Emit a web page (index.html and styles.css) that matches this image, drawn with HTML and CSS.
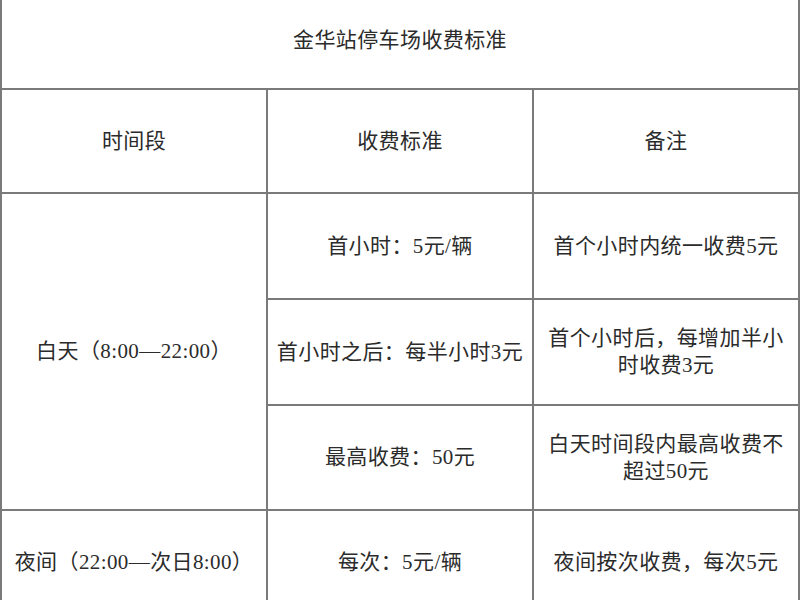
FILE: index.html
```html
<!DOCTYPE html>
<html lang="zh-CN">
<head>
<meta charset="utf-8">
<title>金华站停车场收费标准</title>
<link rel="stylesheet" href="styles.css">
</head>
<body>
<div class="sheet">
  <div class="cell title">金华站停车场收费标准</div>
  <div class="cell head">时间段</div>
  <div class="cell head">收费标准</div>
  <div class="cell head">备注</div>
  <div class="cell day">白天（8:00—22:00）</div>
  <div class="cell">首小时：5元/辆</div>
  <div class="cell">首个小时内统一收费5元</div>
  <div class="cell">首小时之后：每半小时3元</div>
  <div class="cell">首个小时后，每增加半小时收费3元</div>
  <div class="cell">最高收费：50元</div>
  <div class="cell">白天时间段内最高收费不超过50元</div>
  <div class="cell">夜间（22:00—次日8:00）</div>
  <div class="cell">每次：5元/辆</div>
  <div class="cell">夜间按次收费，每次5元</div>
</div>
</body>
</html>
```

FILE: styles.css
```css
* { box-sizing: border-box; }
html, body {
  margin: 0;
  padding: 0;
  background: #ffffff;
}
body {
  font-family: "Liberation Serif", "Noto Sans CJK SC", serif;
  font-size: 21px;
  letter-spacing: 0.4px;
  color: #2b2b2b;
}
.sheet {
  width: 800px;
  display: grid;
  grid-template-columns: 266px 266px 266px;
  grid-template-rows: 90px 104px 106px 106px 105px 105px;
  border-left: 2px solid #7a7a7a;
}
.cell {
  display: flex;
  align-items: center;
  justify-content: center;
  text-align: center;
  padding: 0 8px;
  line-height: 27px;
  border-right: 2px solid #7a7a7a;
  border-bottom: 2px solid #7a7a7a;
}
.title {
  grid-column: 1 / 4;
  padding-bottom: 8px;
}
.day {
  grid-row: 3 / 6;
}
```
